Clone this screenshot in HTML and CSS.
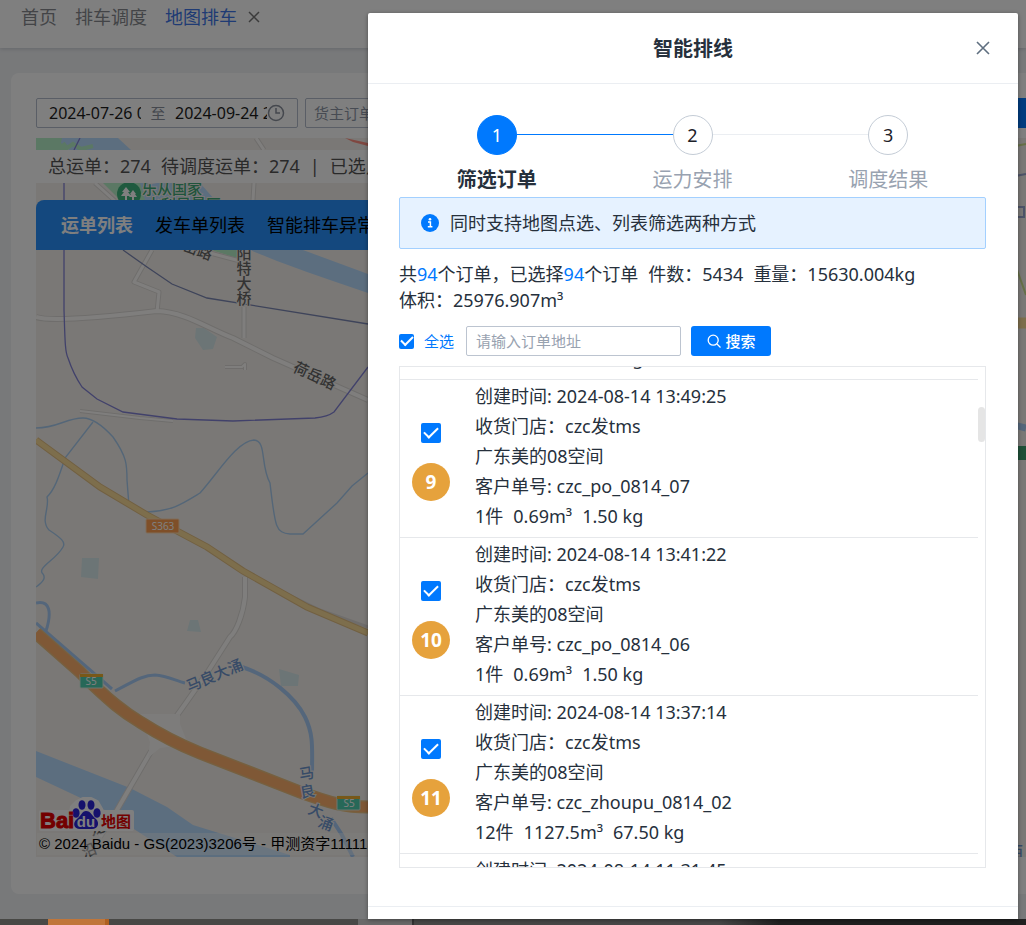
FILE: index.html
```html
<!DOCTYPE html>
<html lang="zh-CN">
<head>
<meta charset="utf-8">
<title>地图排车</title>
<meta name="viewport" content="width=device-width, initial-scale=1">
<link rel="stylesheet" href="styles.css">
</head>
<body>
<div class="shell">
  <nav class="page-tabs">
    <a href="#home">首页</a>
    <a href="#dispatch">排车调度</a>
    <a href="#map" class="current">地图排车</a>
    <button class="tab-close" aria-label="关闭标签"><svg viewBox="0 0 12 12" width="12" height="12"><path d="M1 1l10 10M11 1L1 11"/></svg></button>
  </nav>
  <main class="card">
    <div class="filters">
      <div class="date-range">
        <input type="text" aria-label="开始时间" value="2024-07-26 00:00:00">
        <span class="to">至</span>
        <input type="text" aria-label="结束时间" value="2024-09-24 23:59:59">
        <svg class="clock" viewBox="0 0 18 18" width="18" height="18"><circle cx="9" cy="9" r="7.5"/><path d="M9 4v5h4"/></svg>
      </div>
      <input class="order-filter" type="text" aria-label="货主订单号" placeholder="货主订单号">
      <button class="query" aria-label="查询"></button>
    </div>
    <section class="map" aria-label="地图">
      <svg class="tiles" viewBox="36 138 990 719" preserveAspectRatio="xMinYMin slice">
        <rect x="36" y="138" width="990" height="719" fill="#f5f1ec"/>
        <g fill="#b7f0c8">
          <path d="M36 138h26l6 12H36z"/>
          <path d="M103 183h62l-10 17h-35z"/>
          <path d="M211 250h26v8z"/>
        </g>
        <g fill="#b9dcff">
          <path d="M62 138h56l13 12H69l-8-7z"/>
          <path d="M140 183h60l15 17h-70z"/>
          <path d="M250 250h53l65 24v19l-38-13-23-8-30-11z"/>
          <path d="M36 751l94 37 37 19 26 18 97 30v2H177l-77-50-64-30z"/>
        </g>
        <path d="M63 143l4 5 6-4 8 5 12-3" fill="none" stroke="#b7f0c8" stroke-width="4"/>
        <g fill="#d8eaec">
          <path d="M196 328l8 0 13 9-4 12-10 1-8-12z"/>
          <path d="M82 558h17l-1 21-17-2z"/>
          <path d="M190 620h8l3 12-14-1z"/>
          <path d="M279 669l20 6-1 11-17 0z"/>
        </g>
        <g fill="none" stroke="#a9cdf0" stroke-width="1.4">
          <path d="M36 428C58 428 66 418 83 418C93 418 103 426 113 437C127 457 127 465 127 480L129 506"/>
          <path d="M147 512C172 511 182 504 200 493C218 473 237 441 254 440C267 441 260 465 270 483C275 525 275 533 290 534H303L337 503L352 486L368 473"/>
          <path d="M93 422L65 458C58 480 54 490 47 497C50 508 40 520 49 530C61 538 66 542 63 547C56 560 36 568 43 574C46 578 43 582 36 587"/>
        </g>
        <g fill="none" stroke="#a9cdf6" stroke-width="4">
          <path d="M36 603C50 600 52 612 46 631M36 623L112 689" stroke-width="3"/>
          <path d="M115 691C136 680 144 675 155 675C168 676 176 681 185 683" stroke-width="3"/>
          <path d="M242 667C270 676 295 697 305 717C314 735 312 750 312 774M331 818L342 835L353 857"/>
        </g>
        <g fill="none" stroke="#dedbd8" stroke-linejoin="round">
          <path d="M152 250L134 282L159 292L157 312M254 183l-1 17M256 138l8 12M244 307v31M95 183l20 18M210 253l30 8" stroke-width="5"/>
          <path d="M36 317C50 322 105 317 157 311C185 312 207 328 233 338L273 358L368 400" stroke-width="6"/>
          <path d="M80 411L140 418L173 421M225 367h17l3-3v6" stroke-width="4"/>
          <path d="M245 577L245 597C243 615 236 632 230 637L207 673L183 707L150 753L117 810L100 837" stroke-width="6"/>
          <path d="M273 587L320 610L368 627" stroke-width="3"/>
        </g>
        <g fill="none" stroke="#fffdfb" stroke-linejoin="round">
          <path d="M152 250L134 282L159 292L157 312M254 183l-1 17M256 138l8 12M244 307v31M95 183l20 18M210 253l30 8" stroke-width="3"/>
          <path d="M36 317C50 322 105 317 157 311C185 312 207 328 233 338L273 358L368 400" stroke-width="4"/>
          <path d="M80 411L140 418L173 421M225 367h17l3-3v6" stroke-width="2"/>
          <path d="M245 577L245 597C243 615 236 632 230 637L207 673L183 707L150 753L117 810L100 837" stroke-width="4"/>
        </g>
        <path d="M140 714h40v10l8 20-28 4-12 10 2-16z" fill="#fbf9f7"/>
        <g fill="none" stroke="#8383d6" stroke-width="1.3">
          <path d="M80 138l-6 12M64 183V310C65 340 65 352 68 358C72 370 76 378 82 387L97 399L123 412L177 419L233 421L315 418C325 417 330 415 334 412L368 367"/>
          <path d="M123 250L147 267L172 284L207 298L368 324" stroke="#7d88b5"/>
        </g>
        <path d="M36 440L100 487L147 515L207 547L243 571L307 607L368 633" fill="none" stroke="#e3c084" stroke-width="7"/>
        <path d="M36 440L100 487L147 515L207 547L243 571L307 607L368 633" fill="none" stroke="#fbdc99" stroke-width="5"/>
        <path d="M36 633L80 672C110 702 125 713 140 722C165 738 180 745 200 753L300 792C330 803 345 807 368 807" fill="none" stroke="#ecc080" stroke-width="13"/>
        <path d="M36 633L80 672C110 702 125 713 140 722C165 738 180 745 200 753L300 792C330 803 345 807 368 807" fill="none" stroke="#ffb06c" stroke-width="10"/>
        <path d="M345 138l23 5v3l-15-4z" fill="#ff8e80"/>
        <g class="road-sign">
          <rect x="146" y="519" width="33" height="14" rx="1" fill="#ff9f50" stroke="#ffd8b0"/>
          <text x="163" y="530">S363</text>
          <rect x="80" y="674" width="23" height="14" rx="1" fill="#4fd0b0" stroke="#d9eee0"/>
          <rect x="80" y="674" width="23" height="3" fill="#f0b030"/>
          <text x="91" y="685">S5</text>
          <rect x="337" y="796" width="23" height="14" rx="1" fill="#4fd0b0" stroke="#d9eee0"/>
          <rect x="337" y="796" width="23" height="3" fill="#f0b030"/>
          <text x="349" y="807">S5</text>
        </g>
        <circle cx="129" cy="194" r="12" fill="#3fb57e"/>
        <path d="M126 187l-4 5h2l-3 4h4v4h2v-4h4l-3-4h2zM133 190l-3 4h1l-2 3h3v3h2v-3h3l-2-3h1z" fill="#fff"/>
        <g class="place park"><text x="142" y="194">乐从国家</text><text x="146" y="210">水利风景区</text></g>
        <g class="place">
          <text class="upright" x="244" y="246">阳特大桥</text>
          <text transform="translate(292 371) rotate(25)">荷岳路</text>
          <text transform="translate(182 250) rotate(20)">岳路</text>
          <text transform="translate(92 836) rotate(-20)">龙</text><text transform="translate(84 858) rotate(-20)">沿</text>
        </g>
        <g class="place water">
          <text transform="translate(189 692) rotate(-23)">马良大涌</text>
          <text transform="translate(300 780) rotate(-10)">马</text><text transform="translate(301 798) rotate(-10)">良</text><text transform="translate(307 813) rotate(20)">大</text><text transform="translate(317 826) rotate(20)">涌</text>
        </g>
        <g fill="none">
          <path d="M1010 147l16-3M1010 250l16 45" stroke="#cfe090" stroke-width="2"/>
          <path d="M1010 177l16-3M1010 207h14v10h-14" stroke="#9aa6d0" stroke-width="2"/>
          <path d="M1010 323h16" stroke="#fbdc99" stroke-width="11"/>
          <path d="M1010 424l16 4" stroke="#a9cdf6" stroke-width="7"/>
          <path d="M1010 453h16" stroke="#3fa070" stroke-width="14"/>
        </g>
        <text class="place water" x="1008" y="857">西</text>
      </svg>
      <p class="stats"><span>总运单：274</span><span>待调度运单：274</span><span>|</span><span>已选点：94</span></p>
      <div class="list-tabs">
        <button class="active">运单列表</button><button>发车单列表</button><button>智能排车异常</button>
      </div>
      <footer class="attribution">
        <svg class="logo" viewBox="0 0 96 36" width="96" height="36" role="img" aria-label="百度地图">
          <path class="halo" d="M2 15h30l1-5 5-5 6-3h8l6 3 4 7v3h31v17H2z"/>
          <g fill="#2a22d8"><ellipse cx="37" cy="16" rx="3.6" ry="4.8"/><ellipse cx="43" cy="8" rx="3.5" ry="4.8"/><ellipse cx="52" cy="8" rx="3.5" ry="4.8"/><ellipse cx="58" cy="16" rx="3.6" ry="4.8"/><path d="M47 14c5 0 6 5 10 8 4 4 2 10-4 10H41c-6 0-8-6-3-10 4-3 5-8 9-8z"/></g>
          <text class="logo-bai" x="1" y="31">Bai</text>
          <text class="logo-du" x="47" y="30">du</text>
          <text class="logo-map" x="62" y="30">地图</text>
        </svg>
        <p>© 2024 Baidu - GS(2023)3206号 - 甲测资字11111342</p>
      </footer>
    </section>
  </main>
</div>
<div class="taskbar"><span class="app-active"></span><span class="app-rest"></span><span class="app-hover"></span><span class="tray"></span></div>

<div class="overlay">
  <section class="dialog" role="dialog" aria-labelledby="dialog-title">
    <header class="dialog-head">
      <h1 id="dialog-title">智能排线</h1>
      <button class="dialog-close" aria-label="关闭"><svg viewBox="0 0 14 14" width="14" height="14"><path d="M1 1l12 12M13 1L1 13"/></svg></button>
    </header>
    <div class="dialog-body">
      <ol class="steps">
        <li class="done"><span class="dot">1</span><b>筛选订单</b></li>
        <li><span class="dot">2</span><b>运力安排</b></li>
        <li><span class="dot">3</span><b>调度结果</b></li>
      </ol>
      <div class="notice">
        <svg viewBox="0 0 18 18" width="18" height="18"><circle cx="9" cy="9" r="9" fill="#0079fe"/><circle cx="9" cy="5.2" r="1.3" fill="#fff"/><path d="M7 8h2.4v4.6M6.8 12.8h4.6" fill="none" stroke="#fff" stroke-width="1.5"/></svg>
        <span>同时支持地图点选、列表筛选两种方式</span>
      </div>
      <p class="summary"><span>共<em>94</em>个订单，已选择<em>94</em>个订单</span><span>件数：5434</span><span>重量：15630.004kg</span><span>体积：25976.907m³</span></p>
      <form class="search">
        <label><input class="check" type="checkbox" checked>全选</label>
        <input class="address" type="text" placeholder="请输入订单地址" aria-label="订单地址">
        <button class="submit" type="button"><svg viewBox="0 0 14 14" width="14" height="14"><circle cx="6.2" cy="6.2" r="5"/><path d="M10 10l3.5 3.5"/></svg>搜索</button>
      </form>
      <div class="orders-frame">
        <ul class="orders">
          <li class="tail"><div class="info"><p><span>1件</span><span>0.69m³</span><span>1.50 kg</span></p></div></li>
          <li>
            <div class="pick"><input class="check large" type="checkbox" checked aria-label="选择订单 9"><span class="badge">9</span></div>
            <div class="info"><p>创建时间: 2024-08-14 13:49:25</p><p>收货门店：czc发tms</p><p>广东美的08空间</p><p>客户单号: czc_po_0814_07</p><p><span>1件</span><span>0.69m³</span><span>1.50 kg</span></p></div>
          </li>
          <li>
            <div class="pick"><input class="check large" type="checkbox" checked aria-label="选择订单 10"><span class="badge">10</span></div>
            <div class="info"><p>创建时间: 2024-08-14 13:41:22</p><p>收货门店：czc发tms</p><p>广东美的08空间</p><p>客户单号: czc_po_0814_06</p><p><span>1件</span><span>0.69m³</span><span>1.50 kg</span></p></div>
          </li>
          <li>
            <div class="pick"><input class="check large" type="checkbox" checked aria-label="选择订单 11"><span class="badge">11</span></div>
            <div class="info"><p>创建时间: 2024-08-14 13:37:14</p><p>收货门店：czc发tms</p><p>广东美的08空间</p><p>客户单号: czc_zhoupu_0814_02</p><p><span>12件</span><span>1127.5m³</span><span>67.50 kg</span></p></div>
          </li>
          <li>
            <div class="info bare"><p>创建时间: 2024-08-14 11:31:45</p></div>
          </li>
        </ul>
        <span class="thumb"></span>
      </div>
    </div>
    <footer class="dialog-foot"></footer>
  </section>
</div>
</body>
</html>
```
FILE: styles.css
```css
* { box-sizing: border-box; }
body {
  margin: 0;
  height: 100vh;
  display: flex;
  flex-direction: column;
  overflow: hidden;
  position: relative;
  background: #f0f2f5;
  color: #26303c;
  font: 18px/26px "Noto Sans", "Noto Sans CJK SC", sans-serif;
}
h1, p, ol, ul { margin: 0; padding: 0; list-style: none; }
button, input { font: inherit; color: inherit; margin: 0; padding: 0; border: 0; background: none; }
svg { display: block; flex: none; }
em { font-style: normal; color: #0079fe; }

/* Page behind the dialog */
.shell { flex: 1; min-height: 0; display: flex; flex-direction: column; }
.page-tabs {
  height: 48px;
  padding: 0 21px;
  display: flex;
  align-items: flex-start;
  gap: 18px;
  background: #fff;
  line-height: 34px;
  box-shadow: 0 1px 4px rgba(0, 21, 41, .16);
}
.page-tabs a { color: #86898e; text-decoration: none; }
.page-tabs a.current { color: #3f77e8; }
.tab-close { height: 34px; margin-left: -7px; }
.tab-close path { fill: none; stroke: #777; stroke-width: 1.5; }
.card {
  flex: 1;
  min-height: 0;
  margin: 25px 0 25px 11px;
  padding: 25px 0 37px 25px;
  display: flex;
  flex-direction: column;
  gap: 10px;
  background: #fff;
  border-radius: 8px 0 0 8px;
}
.filters { display: flex; gap: 7px; height: 30px; }
.date-range, .order-filter { border: 1px solid #b4bccc; border-radius: 2px; }
.date-range { width: 262px; padding: 0 12px; display: flex; align-items: center; font-size: 16px; color: #1c1c1c; }
.date-range input { width: 92px; height: 28px; }
.date-range .to { width: 34px; text-align: center; font-size: 15px; color: #8a909c; }
.clock { fill: none; stroke: #8a909c; stroke-width: 1.5; }
.order-filter { width: 200px; padding: 0 8px; font-size: 15px; }
.order-filter::placeholder { color: #8e97a6; opacity: 1; }
.query { width: 70px; margin-left: auto; background: #0079fe; }
.map {
  flex: 1;
  min-height: 0;
  padding-top: 12px;
  position: relative;
  overflow: hidden;
  display: flex;
  flex-direction: column;
}
.tiles { position: absolute; inset: 0; width: 100%; height: 100%; }
.stats, .list-tabs, .attribution { position: relative; }
.stats {
  width: 60%;
  height: 33px;
  padding-left: 12px;
  display: flex;
  gap: 10px;
  overflow: hidden;
  white-space: nowrap;
  background: #fff;
  color: #555;
  line-height: 33px;
}
.list-tabs {
  width: 60%;
  height: 50px;
  margin-top: 17px;
  padding-left: 25px;
  display: flex;
  gap: 22px;
  overflow: hidden;
  white-space: nowrap;
  border-radius: 8px 8px 0 0;
  background: #2891fd;
  color: #000;
}
.list-tabs .active { font-weight: 700; color: #fff; }
.attribution { margin-top: auto; font: 15px/22px "Liberation Sans", "Noto Sans CJK SC", sans-serif; color: #000; }
.attribution p { width: 60%; margin: 0 0 2px 1px; padding: 0 2px; white-space: nowrap; background: rgba(255, 255, 255, .4); }
.halo { fill: #fff; stroke: #fff; stroke-width: 4; stroke-linejoin: round; }
.logo { margin-left: 3px; }
.logo-bai, .logo-du { font: 700 20px "Liberation Sans", sans-serif; }
.logo-bai { font-size: 22px; fill: #e60000; stroke: #e60000; stroke-width: 1px; }
.logo-du { font-size: 15px; fill: #fff; text-anchor: middle; }
.logo-map { font: 700 15px "Noto Sans CJK SC", sans-serif; fill: #e60000; }
.place text, text.place { font: 500 15px "Noto Sans CJK SC", sans-serif; fill: #666; stroke: #f5f1ec; stroke-width: 2px; paint-order: stroke; }
.place .upright { writing-mode: vertical-rl; }
.place.water text, text.place.water { fill: #6f96cf; }
.place.park text { fill: #3fa978; }
.road-sign text { font: 10px "Noto Sans", sans-serif; fill: #fff; text-anchor: middle; }

.taskbar { flex: 0 0 6px; display: flex; background: linear-gradient(90deg, #484845, #484848 70%, #202020 76%); }
.app-active { width: 61px; margin-left: 48px; background: #c0763a; border-right: 4px solid #b06020; }
.app-rest { width: 249px; }
.app-hover { width: 56px; background: #696969; border-right: 2px solid #333; }

/* Dialog */
.overlay {
  position: absolute;
  inset: 0 0 6px;
  padding: 13px 8px 0 0;
  display: flex;
  justify-content: flex-end;
  background: rgba(0, 0, 0, .5);
}
.dialog {
  width: min(650px, 100%);
  display: flex;
  flex-direction: column;
  background: #fff;
  border-radius: 2px 2px 0 0;
  box-shadow: 0 1px 4px rgba(0, 0, 0, .4);
}
.dialog-head { height: 71px; padding-top: 2px; display: grid; place-items: center; position: relative; border-bottom: 1px solid #ebeef2; }
.dialog-head h1 { font-size: 20px; line-height: 28px; }
.dialog-close { position: absolute; right: 28px; top: 28px; }
.dialog-close path { fill: none; stroke: #5f6f80; stroke-width: 1.6; }
.dialog-body { flex: 1; min-height: 0; padding: 31px 32px 38px 31px; display: flex; flex-direction: column; }
.dialog-foot { height: 13px; border-top: 1px solid #ebeef2; }

.steps { display: flex; padding-bottom: 3px; }
.steps li { flex: 1; display: flex; flex-direction: column; align-items: center; gap: 11px; position: relative; }
.steps li:not(:last-child)::after {
  content: "";
  position: absolute;
  top: 19px;
  left: calc(50% + 20px);
  width: calc(100% - 40px);
  height: 1px;
  background: #ebeef2;
}
.steps .done::after { background: #0079fe !important; }
.dot { width: 40px; height: 40px; border: 1px solid #c4ccd6; border-radius: 50%; line-height: 38px; text-align: center; color: #1d2129; }
.steps b { font-size: 20px; line-height: 28px; font-weight: 400; color: #98a2b0; }
.done .dot { background: #0079fe; border-color: #0079fe; color: #fff; }
.steps .done b { font-weight: 700; color: #26303c; }

.notice { height: 52px; padding: 0 21px; display: flex; align-items: center; gap: 11px; border: 1px solid #a3d0ff; border-radius: 2px; background: #e6f2ff; }
.summary { margin: 12px 0 13px; display: flex; flex-wrap: wrap; column-gap: 10px; }
.search { display: flex; gap: 10px; height: 30px; font-size: 15px; }
.search label { display: flex; align-items: center; gap: 10px; margin-right: 2px; color: #0079fe; }
.address { width: 215px; padding: 0 9px; border: 1px solid #bcc4d0; border-radius: 2px; }
.address::placeholder { color: #98a2b0; opacity: 1; }
.submit { width: 80px; display: flex; align-items: center; justify-content: center; gap: 5px; border-radius: 3px; background: #0079fe; color: #fff; font-weight: 500; }
.submit svg { fill: none; stroke: #fff; stroke-width: 1.3; }

.check { appearance: none; width: 15px; height: 15px; display: grid; place-items: center; border-radius: 2px; background: #0079fe; }
.check::after { content: ""; width: 10px; height: 5px; margin-bottom: 4px; border: solid #fff; border-width: 0 0 2px 2px; transform: rotate(-45deg); }
.check.large { width: 20px; height: 20px; }
.check.large::after { width: 12px; height: 6px; }

.orders-frame { flex: 1; min-height: 0; margin-top: 10px; position: relative; border: 1px solid #e6e8eb; }
.orders { height: 100%; padding-right: 7px; overflow: hidden; }
.orders li { display: flex; gap: 25px; padding-left: 12px; border-bottom: 1px solid #e6e8eb; }
.orders .tail { height: 13px; align-items: flex-end; overflow: hidden; }
.tail .info, .info.bare { margin-left: 63px; }
.pick { width: 38px; padding-top: 43px; display: flex; flex-direction: column; align-items: center; gap: 20px; }
.badge { width: 38px; height: 38px; border-radius: 50%; background: #e6a23c; color: #fff; font-size: 19px; font-weight: 700; line-height: 38px; text-align: center; }
.info { padding: 1px 0 6px; line-height: 30px; }
.info p { display: flex; gap: 10px; white-space: pre; }
.thumb { position: absolute; top: 40px; right: 0; width: 7px; height: 35px; border-radius: 4px; background: #e5e5e5; }
```
